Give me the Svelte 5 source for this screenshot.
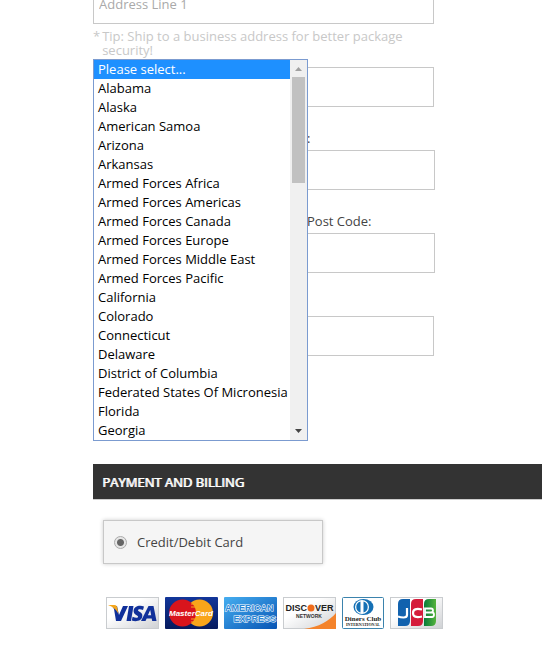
<script>
  const states = [
    'Please select...', 'Alabama', 'Alaska', 'American Samoa', 'Arizona', 'Arkansas',
    'Armed Forces Africa', 'Armed Forces Americas', 'Armed Forces Canada',
    'Armed Forces Europe', 'Armed Forces Middle East', 'Armed Forces Pacific',
    'California', 'Colorado', 'Connecticut', 'Delaware', 'District of Columbia',
    'Federated States Of Micronesia', 'Florida', 'Georgia'
  ];
  let selected = $state(0);
  let payment = $state('card');
</script>

<main>
  <form class="address">
    <input class="field" type="text" placeholder="Address Line 1" aria-label="Address Line 1" />
    <p class="tip"><span>*</span><span>Tip: Ship to a business address for better package security!</span></p>

    <div class="state">
      <input class="field" type="text" aria-label="State" />
      <div class="menu">
        <div class="options" role="listbox" aria-label="State">
          {#each states as name, i}
            <button type="button" role="option" aria-selected={i === selected} onclick={() => (selected = i)}>{name}</button>
          {/each}
        </div>
        <div class="scroll">
          <svg width="17" height="17" viewBox="0 0 17 17"><path d="M5 11h7L8.500 7z" fill="#a0a0a0" /></svg>
          <div class="thumb"></div>
          <svg class="down" width="17" height="17" viewBox="0 0 17 17"><path d="M5 6h7L8.500 10z" fill="#444" /></svg>
        </div>
      </div>
    </div>

    <label class="caption" for="city">:</label>
    <input class="field wide" id="city" type="text" aria-label="City" />
    <label class="caption" for="zip">Post Code:</label>
    <input class="field wide" id="zip" type="text" />
    <input class="field phone" type="tel" aria-label="Phone" />
  </form>

  <h2>PAYMENT AND BILLING</h2>

  <label class="method">
    <input type="radio" name="payment" value="card" bind:group={payment} />
    <span>Credit/Debit Card</span>
  </label>

  <div class="cards">
    <svg width="53" height="32" viewBox="0 0 53 32" role="img" aria-label="Visa">
      <defs>
        <linearGradient id="silver" x1="0" y1="0" x2="1" y2="1">
          <stop offset="0.350" stop-color="#fff" /><stop offset="1" stop-color="#cfd1d4" />
        </linearGradient>
      </defs>
      <rect x=".5" y=".5" width="52" height="31" fill="url(#silver)" stroke="#c9cccf" />
      <g fill="#10309a">
        <path d="M6 9h5l2 9 4-9h5l-7 15h-5L8 12z" />
        <path d="M23 9h4.500l-2.500 15h-4.500z" />
        <path d="M38 9.500l-1 3.500c-3-1.300-5-.8-5 .3 0 1.600 5 1.800 4.300 6-.5 4.500-6 5.800-10.500 4.200l.8-3.700c3 1.500 5.400 1.200 5.500 0 .1-1.700-4.800-1.900-4.500-6 .4-4.500 5.700-6 10.400-4.300z" />
        <path fill-rule="evenodd" d="M42.500 9h5L50.500 24h-4.300l-.5-2.500h-5L39.500 24h-4.500zm1.700 4l-2.300 5.300h3.300z" />
      </g>
      <path d="M2 8h6.500c2 0 2.500 1 3 4l1 5C10 12 7 10 2 8z" fill="#f5a71c" />
    </svg>

    <svg width="53" height="32" viewBox="0 0 53 32" role="img" aria-label="MasterCard">
      <defs>
        <linearGradient id="navy" x1="0" y1="0" x2="0" y2="1">
          <stop offset="0" stop-color="#12369a" /><stop offset="1" stop-color="#061a5d" />
        </linearGradient>
      </defs>
      <rect width="53" height="32" rx="1" fill="url(#navy)" />
      <circle cx="34.500" cy="16" r="13.500" fill="#f9a51a" />
      <circle cx="17.500" cy="16" r="13.500" fill="#d9141c" />
      <path d="M26 7h4M26 10h5M26 22h5M26 25h4" stroke="#f9a51a" />
      <text x="26" y="19" text-anchor="middle" class="mc">MasterCard</text>
    </svg>

    <svg width="53" height="32" viewBox="0 0 53 32" role="img" aria-label="American Express">
      <defs>
        <linearGradient id="blue" x1="0" y1="0" x2="1" y2="1">
          <stop offset="0" stop-color="#46aef0" /><stop offset="1" stop-color="#0754b4" />
        </linearGradient>
      </defs>
      <rect width="53" height="32" rx="1" fill="url(#blue)" />
      <text x="1" y="14" class="amex">AMERICAN</text>
      <text x="52" y="25" text-anchor="end" class="amex">EXPRESS</text>
    </svg>

    <svg width="53" height="32" viewBox="0 0 53 32" role="img" aria-label="Discover Network">
      <rect x=".5" y=".5" width="52" height="31" fill="url(#silver)" stroke="#c9cccf" />
      <path d="M21 32C36 30 46 24 53 16v16z" fill="#f4832b" />
      <text x="24" y="14" text-anchor="end" class="disc">DISC</text>
      <circle cx="28" cy="11" r="3.500" fill="#ef6c1b" />
      <text x="32" y="14" class="disc">VER</text>
      <text x="26" y="21" text-anchor="middle" class="net">NETWORK</text>
    </svg>

    <svg width="42" height="32" viewBox="0 0 42 32" role="img" aria-label="Diners Club International">
      <rect x=".5" y=".5" width="41" height="31" rx="1" fill="#fff" stroke="#3b83ad" />
      <ellipse cx="21.500" cy="10" rx="10" ry="8" fill="#1570b5" />
      <circle cx="20" cy="10" r="7" fill="#fff" />
      <path d="M18.500 4.500v11a5.700 5.700 0 0 1 0-11zM21.500 4.500v11a5.700 5.700 0 0 0 0-11z" fill="#1570b5" />
      <text x="21" y="24" text-anchor="middle" class="diners">Diners Club</text>
      <text x="21" y="29" text-anchor="middle" class="intl">INTERNATIONAL</text>
    </svg>

    <svg width="53" height="32" viewBox="0 0 53 32" role="img" aria-label="JCB">
      <defs>
        <linearGradient id="green" x1="0" x2="1">
          <stop offset="0" stop-color="#087b3b" /><stop offset="1" stop-color="#55b43c" />
        </linearGradient>
      </defs>
      <rect x=".5" y=".5" width="52" height="31" fill="url(#silver)" stroke="#c9cccf" />
      <path d="M13 2h7v22q0 5-5 5H8V7q0-5 5-5z" fill="#1262ae" />
      <path d="M26 2h7v22q0 5-5 5h-7V7q0-5 5-5z" fill="#d51c3b" />
      <path d="M39 2h7v22q0 5-5 5h-7V7q0-5 5-5z" fill="url(#green)" />
      <g fill="none" stroke="#fff" stroke-width="2.200">
        <path d="M17 11v7q0 2.500-3.500 2.500-3 0-5.500-1" />
        <path d="M32 12.500q-9-2-9 3.500t9 3.500" />
        <path d="M35 11.500h6q2 0 2 2t-2 2h-6zm0 4h7q2 0 2 2.200t-2 2.300h-7z" stroke-width="1.800" />
      </g>
    </svg>
  </div>
</main>

<style>
  :global(body) { margin: 0; background: #fff; }
  main {
    padding-left: 93px;
    overflow: hidden;
    font: 13px/18px "Open Sans", "Noto Sans", sans-serif;
    color: #444;
  }
  .address { display: flex; flex-direction: column; max-width: 342px; margin-top: -16px; }
  .field {
    box-sizing: border-box;
    width: calc(100% - 1px);
    height: 40px;
    margin: 0;
    padding: 0 5px;
    border: 1px solid #c8c8c8;
    background: #fff;
    font: inherit;
    color: #444;
    outline: 0;
  }
  .field.wide { width: 100%; }
  .field::placeholder { color: #a9a9a9; opacity: 1; }
  .tip { display: flex; gap: 2px; margin: 5px 0 10px; line-height: 14px; color: #c8c8c8; }
  .state { position: relative; }
  .menu {
    position: absolute;
    top: -8px;
    left: 0;
    z-index: 1;
    display: flex;
    border: 1px solid #7b9bd0;
    background: #fff;
    color: #000;
  }
  .options { display: flex; flex-direction: column; width: 196px; }
  .options button {
    height: 19px;
    padding: 0 4px;
    border: 0;
    background: none;
    font: inherit;
    line-height: 19px;
    color: inherit;
    text-align: left;
    white-space: nowrap;
  }
  .options button[aria-selected="true"] { background: #1e90ff; color: #fff; }
  .scroll { display: flex; flex-direction: column; width: 17px; background: #f0f0f0; }
  .thumb { height: 106px; margin: 0 2px; background: #c1c1c1; }
  .down { margin-top: auto; }
  .caption { height: 18px; margin: 22px 0 3px; padding-left: 214px; }
  .phone { margin-top: 43px; }
  h2 {
    margin: 108px 0 0;
    padding: 1px 9px 0;
    border-bottom: 1px solid #ccc;
    background: #333;
    font-size: 13px;
    line-height: 34px;
    font-weight: 400;
    color: #fff;
    text-shadow: 1px 0 #fff;
  }
  .method {
    display: flex;
    align-items: center;
    gap: 10px;
    box-sizing: border-box;
    width: 220px;
    height: 44px;
    margin: 20px 0 0 10px;
    padding: 0 10px;
    border: 1px solid #c8c8c8;
    background: #f5f5f5;
    box-shadow: 0 0 4px #ccc;
  }
  .method input {
    appearance: none;
    width: 13px;
    height: 13px;
    margin: 0;
    border: 1px solid #aaa;
    border-radius: 50%;
    background: radial-gradient(circle, #666 3px, #e6e6e6 4px);
  }
  .cards { display: flex; gap: 6px; margin: 33px 0 17px 13px; }
  .cards svg { flex: none; }
  .mc { font: italic 700 8px "Liberation Sans", sans-serif; fill: #fff; }
  .amex { font: 700 9px "Liberation Sans", sans-serif; fill: #2b86d6; stroke: #fff; stroke-width: 1px; paint-order: stroke; }
  .disc { font: 700 9px "Liberation Sans", sans-serif; fill: #222; }
  .net { font: 700 5px "Liberation Sans", sans-serif; fill: #333; }
  .diners { font: 700 7px "Liberation Serif", serif; fill: #222; }
  .intl { font: 700 4px "Liberation Serif", serif; fill: #222; }
</style>
